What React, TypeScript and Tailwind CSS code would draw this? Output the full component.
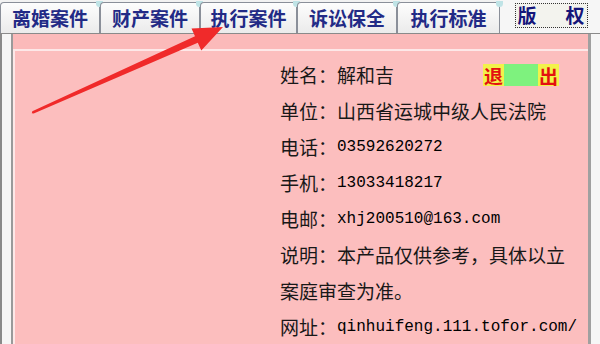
const tabs = ["离婚案件", "财产案件", "执行案件", "诉讼保全", "执行标准"];

const rows: { label: string; value: string; mono?: boolean }[] = [
    { label: "单位：", value: "山西省运城中级人民法院" },
    { label: "电话：", value: "03592620272", mono: true },
    { label: "手机：", value: "13033418217", mono: true },
    { label: "电邮：", value: "xhj200510@163.com", mono: true },
];

const cjk = "font-['Noto_Sans_CJK_SC','Noto_Sans',sans-serif]";
const mono = "font-['Liberation_Mono','Noto_Sans_CJK_SC',monospace] text-[16px] text-[#000]";

const Arrow = () => (
    <svg
        className="pointer-events-none absolute left-0 top-0"
        width="600"
        height="344"
        viewBox="0 0 600 344"
    >
        <polygon
            points="32.3,111.2 195,36.3 191.5,28.5 223,27 201.3,50.5 197.8,42.7 33.7,113.6 31.8,113.2"
            fill="#f02a2a"
        />
    </svg>
);

const App = () => {
    return (
        <div
            className={`relative flex h-[344px] w-[600px] flex-col overflow-hidden bg-[#f2f2f2] ${cjk}`}
        >
            {/* tab strip */}
            <div className="flex h-[33px] items-end">
                {tabs.map((t, i) => (
                    <div
                        key={t}
                        className={`relative flex h-[31px] items-center justify-center rounded-t-[4px] border border-b-0 border-[#8a8f99] bg-gradient-to-b from-[#fdfdfd] to-[#ebebeb] text-[19px] font-semibold text-[#222a86] ${
                            i === 2 ? "w-[97px]" : i === 4 ? "w-[103px]" : "w-[100px]"
                        }`}
                    >
                        {t}
                        <span className="absolute -right-[4px] -top-[2px] h-[6px] w-[7px] rounded-b-full bg-[#bfe3e6]" />
                    </div>
                ))}
                <div className="flex h-[33px] flex-1 items-start justify-center bg-[#f6f6f6] pl-[2px] pt-[3px]">
                    <div className="flex h-[25px] w-[73px] items-center justify-between border border-dotted border-[#333] bg-[#f3f3ee] px-[2px] text-[19px] font-bold text-[#15157a]">
                        <span>版</span>
                        <span>权</span>
                    </div>
                </div>
            </div>

            {/* panel */}
            <div className="flex flex-1 border-l-[2px] border-t border-[#8a8a8a] bg-[#f6f6f6] pl-[9px] pr-[9px]">
                <div className="flex flex-1 flex-col border-l-[2px] border-r-[3px] border-l-[#9a9a9a] border-r-[#a0a0a0] bg-[#fbbaba] pt-[4px]">
                    <div className="mt-[11px] flex flex-1 flex-col border-l-[2px] border-t-[2px] border-[#fde8e8] bg-[#fcbebe] pl-[265px] pt-[6px] text-[19px] leading-[36px] text-[#181818]">
                        <div className="flex items-center">
                            <span>姓名：解和吉</span>
                            <span className="ml-[89px] flex h-[22px] w-[76px] items-center justify-between bg-[#7ef27e] text-[19px] font-bold leading-none text-[#e41010]">
                                <span className="flex h-full items-center bg-[#f2f24a] px-[1px]">退</span>
                                <span className="flex h-full items-center bg-[#f2f24a] px-[1px]">出</span>
                            </span>
                        </div>
                        {rows.map((r) => (
                            <div key={r.label} className="flex items-center">
                                <span>{r.label}</span>
                                <span className={r.mono ? mono : ""}>{r.value}</span>
                            </div>
                        ))}
                        <div className="whitespace-nowrap">说明：本产品仅供参考，具体以立</div>
                        <div>案庭审查为准。</div>
                        <div className="flex items-center whitespace-nowrap">
                            <span>网址：</span>
                            <span className={mono}>qinhuifeng.111.tofor.com/</span>
                        </div>
                    </div>
                </div>
            </div>

            <Arrow />
        </div>
    );
};

export default App;
